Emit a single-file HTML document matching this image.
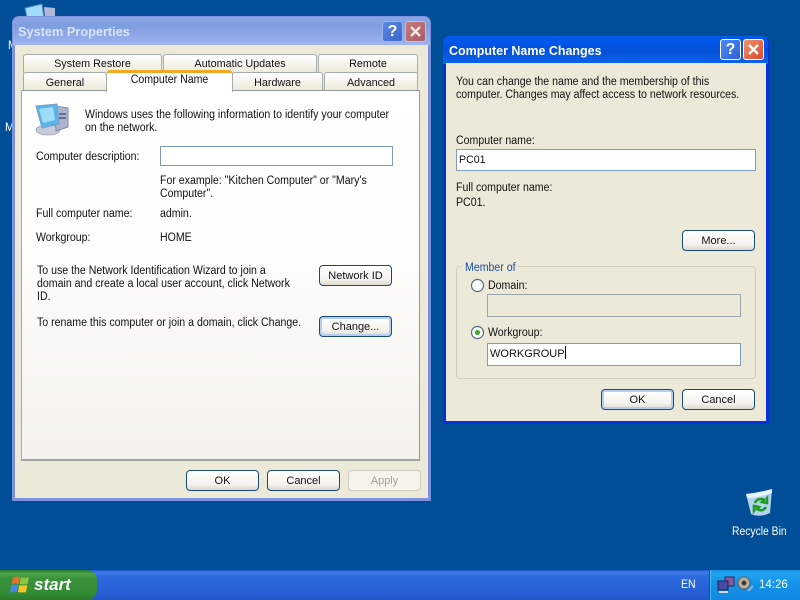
<!DOCTYPE html>
<html><head><meta charset="utf-8"><title>System Properties</title>
<style>
html,body{margin:0;padding:0;width:800px;height:600px;overflow:hidden;background:#004e98}
*{box-sizing:border-box}
body{position:relative;font-family:"Liberation Sans","DejaVu Sans",sans-serif;font-size:11px;color:#000}
.a,.t,.btn,.tab,.inp{position:absolute}
.t{white-space:nowrap;line-height:13px;color:#111;font-size:11.5px;transform:scaleX(.92);transform-origin:0 0;margin-top:1px}
.t.n{margin-top:0}
.btn{height:21px;border:1px solid #1c4a78;border-radius:4px;background:linear-gradient(#fff,#f4f3ee 70%,#dcd8cc);text-align:center;line-height:21px;font-size:11px;color:#111;white-space:nowrap}
.btn.def{box-shadow:inset 0 0 0 2px #b4cdf0}
.btn.dis{border-color:#cfcdc0;background:#f4f3ec;color:#a4a294}
.tab{height:19px;border:1px solid #a6aca8;border-bottom:0;border-radius:3px 3px 0 0;background:linear-gradient(#fff,#ece9d8);text-align:center;line-height:19px;font-size:10.8px;color:#111;white-space:nowrap}
.tab.r2{line-height:21px}
.inp{background:#fff;border:1px solid #7f9db9;font-size:11px;line-height:20px;padding-left:2px;color:#111;white-space:nowrap}
.tb{position:absolute;width:21px;height:21px;border:1px solid #fff;border-radius:3px;color:#fff;text-align:center;font-weight:bold;font-size:16px;line-height:19px}
</style></head><body>

<!-- desktop icons -->
<svg class="a" style="left:22px;top:2px" width="36" height="16"><path d="M3 6 L20 2 L22 16 L5 16Z" fill="#9fdcf8" stroke="#5b7fb5"/><path d="M22 5 L33 6 L33 16 L23 16Z" fill="#b4b8d8"/></svg>
<div class="t" style="left:8px;top:38px;color:#fff;font-size:12px">M</div>
<div class="t" style="left:5px;top:120px;color:#fff;font-size:12px">M</div>

<!-- System Properties (inactive) -->
<div class="a" style="left:12px;top:16px;width:419px;height:485px;background:#7c92dc;border-radius:7px 7px 0 0"></div>
<div class="a" style="left:13px;top:17px;width:417px;height:28px;border-radius:6px 6px 0 0;background:linear-gradient(#8aa6e6,#7f9ce2 30%,#97aeea 85%,#a3b8ee)"></div>
<div class="t n" style="left:18px;top:24px;font-size:13px;line-height:16px;font-weight:bold;color:#d8e4f8;transform:scaleX(.98)">System Properties</div>
<div class="tb" style="left:382px;top:21px;background:linear-gradient(135deg,#5b86e0,#3a66c8);border-color:#9cb6ec">?</div>
<div class="tb" style="left:405px;top:21px;background:linear-gradient(135deg,#c67a78,#a95a66);border-color:#c8bcd8">
<svg width="19" height="19" style="display:block"><path d="M5 5 L14 14 M14 5 L5 14" stroke="#f4e8e8" stroke-width="2.4"/></svg></div>
<div class="a" style="left:15px;top:45px;width:413px;height:453px;background:#ece9d8"></div>

<div class="tab" style="left:23px;top:54px;width:139px">System Restore</div>
<div class="tab" style="left:163px;top:54px;width:154px">Automatic Updates</div>
<div class="tab" style="left:318px;top:54px;width:100px">Remote</div>
<div class="tab r2" style="left:23px;top:72px;width:84px">General</div>
<div class="tab r2" style="left:232px;top:72px;width:91px">Hardware</div>
<div class="tab r2" style="left:324px;top:72px;width:94px">Advanced</div>

<div class="a" style="left:21px;top:90px;width:399px;height:371px;background:linear-gradient(#fff,#fdfdfb 40%,#f3f2ec);border:1px solid #919b9c;border-left-color:#a5abaa;border-bottom:2px solid #a0a59f"></div>
<div class="a" style="left:106px;top:71px;width:127px;height:21px;background:#fff;border:1px solid #a6aca8;border-top:0;border-bottom:0;border-radius:3px 3px 0 0"></div>
<div class="a" style="left:107px;top:70px;width:125px;height:3px;background:#f5a623;border-radius:3px 3px 0 0"></div>
<div class="t" style="left:106px;top:73px;width:127px;text-align:center;transform-origin:50% 0">Computer Name</div>

<svg class="a" style="left:35px;top:103px" width="36" height="33">
<ellipse cx="13" cy="27" rx="12" ry="5" fill="#c8ccd8" stroke="#8d95ae" stroke-width=".7"/>
<path d="M20 3 L33 5 L33 24 L21 28Z" fill="#aab2cc" stroke="#7e8cac"/>
<path d="M24 10h7v2h-7zM24 14h7v2h-7z" fill="#5f6e98"/>
<path d="M1 3 L22 1 L24 21 L7 25Z" fill="#5ab4ea" stroke="#7c9bc6"/>
<path d="M4 6 L18 4 L20 17 L8 20Z" fill="#9fdcfa"/>
</svg>

<div class="t" style="left:85px;top:108px">Windows uses the following information to identify your computer</div>
<div class="t" style="left:85px;top:121px">on the network.</div>
<div class="t" style="left:36px;top:150px">Computer description:</div>
<div class="inp" style="left:160px;top:146px;width:233px;height:20px"></div>
<div class="t" style="left:160px;top:174px">For example: "Kitchen Computer" or "Mary's</div>
<div class="t" style="left:160px;top:187px">Computer".</div>
<div class="t" style="left:36px;top:207px">Full computer name:</div>
<div class="t" style="left:160px;top:207px">admin.</div>
<div class="t" style="left:36px;top:231px">Workgroup:</div>
<div class="t" style="left:160px;top:231px">HOME</div>
<div class="t" style="left:37px;top:264px">To use the Network Identification Wizard to join a</div>
<div class="t" style="left:37px;top:277px">domain and create a local user account, click Network</div>
<div class="t" style="left:37px;top:290px">ID.</div>
<div class="t" style="left:37px;top:316px">To rename this computer or join a domain, click Change.</div>
<div class="btn" style="left:319px;top:265px;width:73px">Network ID</div>
<div class="btn def" style="left:319px;top:316px;width:73px">Change...</div>

<div class="btn" style="left:186px;top:470px;width:73px">OK</div>
<div class="btn" style="left:267px;top:470px;width:73px">Cancel</div>
<div class="btn dis" style="left:348px;top:470px;width:73px">Apply</div>

<!-- Computer Name Changes (active) -->
<div class="a" style="left:443px;top:36px;width:326px;height:388px;background:#0831d9;border-radius:7px 7px 0 0"></div>
<div class="a" style="left:443px;top:36px;width:325px;height:28px;border-radius:6px 6px 0 0;background:linear-gradient(#0a5ae8,#0058ee 12%,#0450d8 50%,#0a5ee8 85%,#0b66f0)"></div>
<div class="t n" style="left:449px;top:43px;font-size:13px;line-height:16px;font-weight:bold;color:#fff;transform:scaleX(.96)">Computer Name Changes</div>
<div class="tb" style="left:720px;top:39px;background:linear-gradient(135deg,#4f8af0,#2a62d8)">?</div>
<div class="tb" style="left:743px;top:39px;background:linear-gradient(135deg,#f0936c,#d84a2c)">
<svg width="19" height="19" style="display:block"><path d="M5 5 L14 14 M14 5 L5 14" stroke="#fff" stroke-width="2.4"/></svg></div>
<div class="a" style="left:446px;top:63px;width:320px;height:358px;background:#ece9d8"></div>

<div class="t" style="left:456px;top:75px">You can change the name and the membership of this</div>
<div class="t" style="left:456px;top:88px">computer. Changes may affect access to network resources.</div>
<div class="t" style="left:456px;top:134px">Computer name:</div>
<div class="inp" style="left:456px;top:149px;width:300px;height:22px;font-size:10.6px">PC01</div>
<div class="t" style="left:456px;top:181px">Full computer name:</div>
<div class="t" style="left:456px;top:196px">PC01.</div>
<div class="btn" style="left:682px;top:230px;width:73px">More...</div>

<div class="a" style="left:456px;top:266px;width:300px;height:113px;border:1px solid #d0d0bf;border-radius:4px"></div>
<div class="a" style="left:462px;top:262px;width:56px;height:12px;background:#ece9d8"></div>
<div class="t" style="left:465px;top:261px;color:#1c4fa8">Member of</div>

<svg class="a" style="left:470px;top:278px" width="15" height="15"><circle cx="7.5" cy="7.5" r="6" fill="#fbfbf8" stroke="#4f6a88" stroke-width="1.2"/></svg>
<div class="t" style="left:488px;top:279px">Domain:</div>
<div class="inp" style="left:487px;top:294px;width:254px;height:23px;background:#ece9d8;border-color:#9aa5ac"></div>
<svg class="a" style="left:470px;top:325px" width="15" height="15"><circle cx="7.5" cy="7.5" r="6" fill="#fbfbf8" stroke="#4f6a88" stroke-width="1.2"/><circle cx="7.5" cy="7.5" r="2.6" fill="#42a832"/></svg>
<div class="t" style="left:488px;top:326px">Workgroup:</div>
<div class="inp" style="left:487px;top:343px;width:254px;height:23px;line-height:21px">WORKGROUP<span style="display:inline-block;width:1px;height:13px;background:#000;vertical-align:-2px"></span></div>

<div class="btn def" style="left:601px;top:389px;width:73px">OK</div>
<div class="btn" style="left:682px;top:389px;width:73px">Cancel</div>

<!-- Recycle Bin -->
<svg class="a" style="left:744px;top:487px" width="32" height="32">
<path d="M2 7 Q14 6 28 2 L26 26 Q16 31 7 27Z" fill="#b3d3ef"/>
<path d="M2 7 Q14 6 28 2 L28 6 Q14 11 3 11Z" fill="#e8f2fb"/>
<path d="M11 16 a6 6 0 0 1 9 -3 l-2 2 5 1 0 -5 -1 1 M22 20 a6 6 0 0 1 -9 2 l2 -2 -5 -1 0 5 1 -1" fill="none" stroke="#1f9a24" stroke-width="2.6"/>
</svg>
<div class="t" style="left:732px;top:525px;color:#fff;transform:scaleX(.9)">Recycle Bin</div>

<!-- Taskbar -->
<div class="a" style="left:0;top:570px;width:800px;height:30px;background:linear-gradient(#1f56c8,#3f80ea 8%,#2c69de 20%,#2560d6 70%,#2158c8)"></div>
<div class="a" style="left:709px;top:570px;width:91px;height:30px;background:linear-gradient(#1290e4,#22a4f0 12%,#1494e8 40%,#1188e0);border-left:1px solid #0a4aa8;box-shadow:inset 1px 0 0 #4cc0f4"></div>
<div class="a" style="left:0;top:570px;width:97px;height:30px;border-radius:0 10px 10px 0;background:linear-gradient(#1f7a2a,#4fa24c 12%,#38913a 30%,#358c36 75%,#2a7a2c)"></div>
<svg class="a" style="left:10px;top:575px" width="20" height="20">
<path d="M3 3 Q6 1 10 2 L8.5 9 Q5 8 1.5 9Z" fill="#e8702a"/>
<path d="M11 2 Q14 4 19 2 L17.500 9 Q13 10 9.500 9Z" fill="#8cc63e"/>
<path d="M1.300 10 Q5 9 8.300 10 L7 17 Q4 16 0 18Z" fill="#4a88e0"/>
<path d="M9.300 10 Q13 11 17.300 10 L16 17 Q12 18 8 17Z" fill="#f6c325"/>
</svg>
<div class="t n" style="left:34px;top:576px;font-size:17px;line-height:18px;font-weight:bold;font-style:italic;color:#fff;transform:none">start</div>
<div class="t n" style="left:681px;top:579px;color:#fff">EN</div>
<svg class="a" style="left:717px;top:576px" width="18" height="18"><rect x="8" y="1" width="9" height="9" fill="#8a5a9a" stroke="#2a2a60"/><rect x="1" y="5" width="10" height="9" fill="#4a4aa0" stroke="#20205a"/><path d="M2 16h9" stroke="#d8d8e8" stroke-width="2"/></svg>
<svg class="a" style="left:736px;top:575px" width="20" height="20"><circle cx="8" cy="8" r="6" fill="#b8b09a" stroke="#5a5a58"/><circle cx="8" cy="8" r="2.400" fill="#3a3a38"/><path d="M12 16 L17 11" stroke="#8fb0e0" stroke-width="2"/></svg>
<div class="t n" style="left:759px;top:579px;color:#fff;transform:none">14:26</div>
</body></html>
